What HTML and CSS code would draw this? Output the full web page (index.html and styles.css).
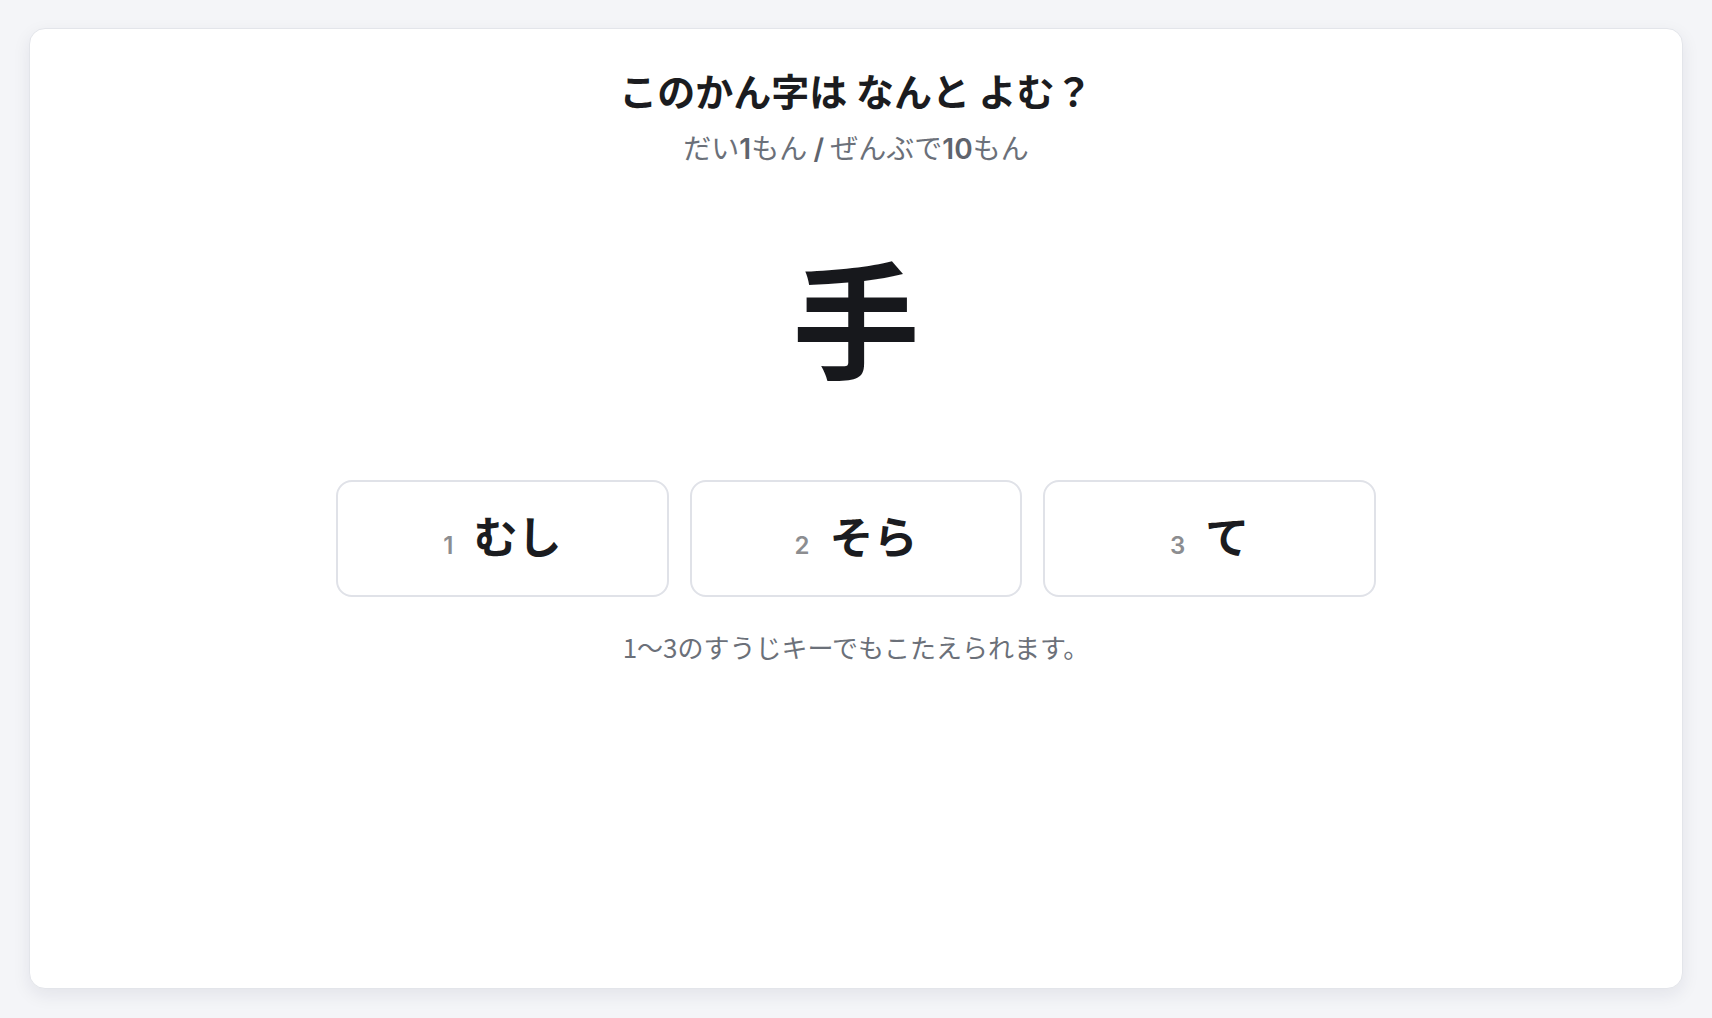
FILE: index.html
```html
<!DOCTYPE html>
<html lang="ja">
<head>
<meta charset="utf-8">
<title>かん字クイズ</title>
<link rel="stylesheet" href="styles.css">
</head>
<body>
<main class="card">
  <h1 class="title">このかん字は なんと よむ？</h1>
  <p class="progress">だい<b>1</b>もん <span class="slash">/</span> ぜんぶで<b>10</b>もん</p>
  <div class="kanji">手</div>
  <div class="choices">
    <button class="choice"><span class="num">1</span><span class="label">むし</span></button>
    <button class="choice"><span class="num">2</span><span class="label">そら</span></button>
    <button class="choice"><span class="num">3</span><span class="label">て</span></button>
  </div>
  <p class="hint">1〜3のすうじキーでもこたえられます。</p>
</main>
</body>
</html>
```

FILE: styles.css
```css
* { box-sizing: border-box; }
html, body { height: 100%; }
body {
  margin: 0;
  padding: 28px 29px 29px;
  background: #f4f5f8;
  font-family: "Noto Sans CJK JP", "Noto Sans", sans-serif;
  color: #1b1c20;
}
.card {
  height: 100%;
  background: #ffffff;
  border: 1px solid #e3e5ea;
  border-radius: 16px;
  box-shadow: 0 6px 18px rgba(20, 30, 60, 0.08);
  display: flex;
  flex-direction: column;
  align-items: center;
  padding-top: 37px;
}
.title {
  margin: 0;
  font-size: 38px;
  line-height: 48px;
  font-weight: 700;
  color: #1b1c20;
}
.progress {
  margin: 14px 0 0;
  font-size: 28px;
  line-height: 38px;
  color: #6b7079;
}
.progress b, .progress .slash {
  font-family: "Inter", "Noto Sans CJK JP", sans-serif;
  font-weight: 600;
  color: #5f646d;
}
.kanji {
  margin-top: 71px;
  font-size: 127px;
  line-height: 152px;
  font-weight: 700;
  color: #17181c;
}
.choices {
  margin-top: 89px;
  width: 1040px;
  display: grid;
  grid-template-columns: repeat(3, 1fr);
  gap: 21px;
}
.choice {
  height: 117px;
  background: #ffffff;
  border: 2px solid #e0e2e8;
  border-radius: 16px;
  display: flex;
  align-items: baseline;
  justify-content: center;
  gap: 20px;
  padding: 0;
  padding-top: 23px;
  font-family: "Noto Sans CJK JP", "Noto Sans", sans-serif;
  cursor: pointer;
}
.num {
  font-family: "Inter", "Noto Sans", sans-serif;
  font-size: 24px;
  font-weight: 600;
  color: #8c8d90;
}
.label {
  font-size: 44px;
  line-height: 60px;
  font-weight: 700;
  color: #1b1c20;
}
.hint {
  margin: 32px 0 0;
  font-size: 26px;
  line-height: 36px;
  color: #6b7079;
}
```
